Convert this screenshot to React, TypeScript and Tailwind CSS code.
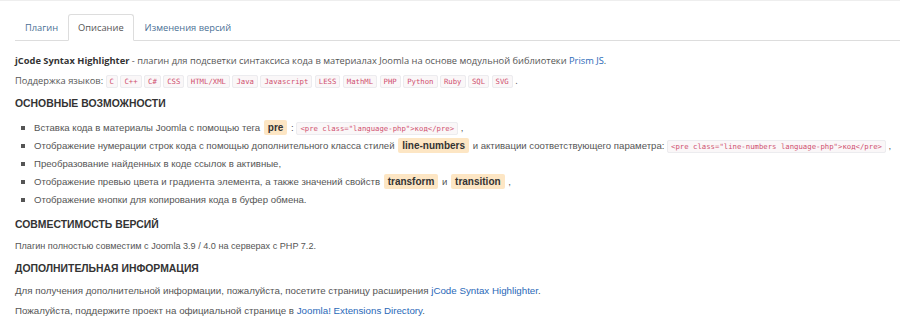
import React from "react";

const Code = ({ children }: { children: React.ReactNode }) => (
  <code className="rounded-[2px] border border-[#ececef] bg-[#faf7f8] px-[3px] py-[1px] text-[7.3px] leading-[11px] text-[#d0506f] [font-family:'DejaVu_Sans_Mono',monospace]">
    {children}
  </code>
);

const Hl = ({ children }: { children: React.ReactNode }) => (
  <span className="mx-[1px] rounded-[2px] bg-[#fde6c4] px-[4px] py-[2px] text-[10px] font-bold text-[#333]">
    {children}
  </span>
);

const langs = ["C", "C++", "C#", "CSS", "HTML/XML", "Java", "Javascript", "LESS", "MathML", "PHP", "Python", "Ruby", "SQL", "SVG"];

export default function App() {
  return (
    <div className="h-[327px] w-[900px] overflow-hidden border-t border-[#eee] bg-white text-[#555] [font-family:'Liberation_Sans',Arial,sans-serif]">
      <div className="ml-[15px] mt-[13px] flex h-[27px] border-b border-[#ddd] text-[9.3px] leading-[14px] [font-family:'Open_Sans',sans-serif]">
        <div className="px-[10px] pt-[7px] text-[#4a6f95]">Плагин</div>
        <div className="-mb-px rounded-t-[3px] border border-b-white border-[#ddd] bg-white px-[9px] pt-[6px] text-[#555]">Описание</div>
        <div className="px-[11px] pt-[7px] text-[#4a6f95]">Изменения версий</div>
      </div>
      <div className="px-[15px] pt-[12px]">
        <p className="text-[9.3px] leading-[16px] [font-family:'Open_Sans',sans-serif]">
          <b className="text-[#333]">jCode Syntax Highlighter</b> - плагин для подсветки синтаксиса кода в материалах Joomla на основе модульной библиотеки <a className="text-[#2a69b8]">Prism JS</a>.
        </p>
        <p className="mt-[4px] text-[9.3px] leading-[16px] [font-family:'Open_Sans',sans-serif]">
          Поддержка языков: {langs.map((l) => (
            <React.Fragment key={l}>
              <Code>{l}</Code>{" "}
            </React.Fragment>
          ))}.
        </p>
        <h3 className="mt-[7px] text-[10.4px] font-bold uppercase leading-[16px] text-[#333]">Основные возможности</h3>
        <ul className="mt-[7px] flex flex-col pl-[19px] text-[9.6px] leading-[18px]">
          {[
            <>Вставка кода в материалы Joomla с помощью тега <Hl>pre</Hl> : <Code>&lt;pre class="language-php"&gt;код&lt;/pre&gt;</Code> ,</>,
            <>Отображение нумерации строк кода с помощью дополнительного класса стилей <Hl>line-numbers</Hl> и активации соответствующего параметра: <Code>&lt;pre class="line-numbers language-php"&gt;код&lt;/pre&gt;</Code> ,</>,
            <>Преобразование найденных в коде ссылок в активные,</>,
            <>Отображение превью цвета и градиента элемента, а также значений свойств <Hl>transform</Hl> и <Hl>transition</Hl> ,</>,
            <>Отображение кнопки для копирования кода в буфер обмена.</>,
          ].map((c, i) => (
            <li key={i} className="relative whitespace-nowrap">
              <span className="absolute left-[-13px] top-[7px] h-[4px] w-[4px] bg-[#555]" />
              {c}
            </li>
          ))}
        </ul>
        <h3 className="mt-[8px] text-[10.4px] font-bold uppercase leading-[16px] text-[#333]">Совместимость версий</h3>
        <p className="mt-[5px] text-[9.1px] leading-[16px]">Плагин полностью совместим с Joomla 3.9 / 4.0 на серверах с PHP 7.2.</p>
        <h3 className="mt-[7px] text-[10.4px] font-bold uppercase leading-[16px] text-[#333]">Дополнительная информация</h3>
        <p className="mt-[6px] text-[9.75px] leading-[16px]">Для получения дополнительной информации, пожалуйста, посетите страницу расширения <a className="text-[#2a69b8]">jCode Syntax Highlighter</a>.</p>
        <p className="mt-[4px] text-[9.75px] leading-[16px]">Пожалуйста, поддержите проект на официальной странице в <a className="text-[#2a69b8]">Joomla! Extensions Directory</a>.</p>
      </div>
    </div>
  );
}
